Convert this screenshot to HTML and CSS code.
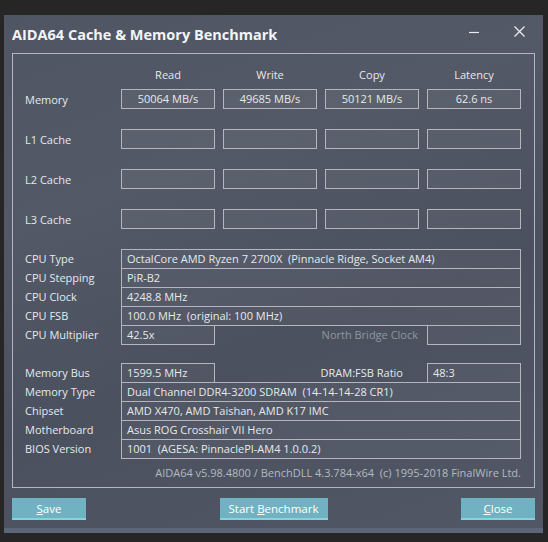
FILE: index.html
```html
<!DOCTYPE html>
<html lang="en">
<head>
    <meta charset="UTF-8">
    <title>AIDA64 Cache &amp; Memory Benchmark</title>
    <link rel="stylesheet" href="styles.css">
</head>
<body>
    <div class="window">
        <!-- Title bar -->
        <header class="titlebar">
            <h1>AIDA64 Cache &amp; Memory Benchmark</h1>
            <div class="controls">
                <svg width="10" height="10" viewBox="0 0 10 10"><path d="M0 6.5h10" stroke="#e8ecef" stroke-width="1.2"/></svg>
                <svg width="11" height="11" viewBox="0 0 11 11"><path d="M0.5 0.5l10 10M10.5 0.5l-10 10" stroke="#e8ecef" stroke-width="1.3"/></svg>
            </div>
        </header>

        <!-- Results panel -->
        <section class="panel">
            <div class="heads">
                <div></div>
                <div class="head">Read</div>
                <div class="head">Write</div>
                <div class="head">Copy</div>
                <div class="head">Latency</div>
            </div>

            <div class="bench">
                <div class="label">Memory</div>
                <div class="box">50064 MB/s</div>
                <div class="box">49685 MB/s</div>
                <div class="box">50121 MB/s</div>
                <div class="box">62.6 ns</div>

                <div class="label">L1 Cache</div>
                <div class="box"></div><div class="box"></div><div class="box"></div><div class="box"></div>

                <div class="label">L2 Cache</div>
                <div class="box"></div><div class="box"></div><div class="box"></div><div class="box"></div>

                <div class="label">L3 Cache</div>
                <div class="box"></div><div class="box"></div><div class="box"></div><div class="box"></div>
            </div>

            <div class="info">
                <div class="label">CPU Type</div>
                <div class="field wide">OctalCore AMD Ryzen 7 2700X&nbsp; (Pinnacle Ridge, Socket AM4)</div>
                <div class="label">CPU Stepping</div>
                <div class="field wide">PiR-B2</div>
                <div class="label">CPU Clock</div>
                <div class="field wide">4248.8 MHz</div>
                <div class="label">CPU FSB</div>
                <div class="field wide">100.0 MHz&nbsp; (original: 100 MHz)</div>
                <div class="label">CPU Multiplier</div>
                <div class="field">42.5x</div>
                <div class="side dim">North Bridge Clock</div>
                <div class="field"></div>
            </div>

            <div class="info">
                <div class="label">Memory Bus</div>
                <div class="field">1599.5 MHz</div>
                <div class="side ratio">DRAM:FSB Ratio</div>
                <div class="field">48:3</div>
                <div class="label">Memory Type</div>
                <div class="field wide">Dual Channel DDR4-3200 SDRAM&nbsp; (14-14-14-28 CR1)</div>
                <div class="label">Chipset</div>
                <div class="field wide">AMD X470, AMD Taishan, AMD K17 IMC</div>
                <div class="label">Motherboard</div>
                <div class="field wide">Asus ROG Crosshair VII Hero</div>
                <div class="label">BIOS Version</div>
                <div class="field wide">1001&nbsp; (AGESA: PinnaclePI-AM4 1.0.0.2)</div>
            </div>

            <p class="version">AIDA64 v5.98.4800 / BenchDLL 4.3.784-x64&nbsp; (c) 1995-2018 FinalWire Ltd.</p>
        </section>

        <!-- Buttons -->
        <div class="buttons">
            <button><u>S</u>ave</button>
            <button>Start <u>B</u>enchmark</button>
            <button><u>C</u>lose</button>
        </div>

        <div class="statusbar"></div>
    </div>
</body>
</html>
```

FILE: styles.css
```css
/* General */
body {
    margin: 0;
    background-color: #262626;
    font-family: "Open Sans", "Noto Sans", sans-serif;
    font-size: 11px;
    color: #e6e9ec;
}

.window {
    margin: 15px 0 0 4px;
    width: 539px;
    height: 518px;
    background-color: #4c5260;
    background-image: linear-gradient(160deg, rgba(255,255,255,0.02) 0%, rgba(255,255,255,0.04) 30%, rgba(0,0,0,0.02) 60%, rgba(255,255,255,0.03) 100%);
    display: flex;
    flex-direction: column;
}

/* Title bar */
.titlebar {
    height: 38px;
    display: flex;
    justify-content: space-between;
    align-items: center;
    padding: 0 18px 0 8px;
}

.titlebar h1 {
    margin: 0;
    font-size: 14.5px;
    font-weight: bold;
    color: #f2f4f6;
    margin-top: 0;
}

.controls {
    display: flex;
    align-items: center;
    gap: 35px;
    margin-top: -6px;
}

/* Panel */
.panel {
    margin: 0 8px;
    height: 423px;
    border: 1px solid #b3b7bd;
    padding: 10px 12px 0 12px;
    display: flex;
    flex-direction: column;
}

.heads,
.bench,
.info {
    display: grid;
    grid-template-columns: 88px repeat(4, 94px);
    column-gap: 8px;
}

.heads {
    height: 20px;
    align-items: center;
    text-align: center;
    margin-bottom: 5px;
}

.bench {
    grid-auto-rows: 20px;
    row-gap: 20px;
}

.label {
    align-self: center;
    white-space: nowrap;
}

.box {
    box-sizing: border-box;
    height: 20px;
    border: 1px solid #b3b7bd;
    background-color: rgba(255, 255, 255, 0.05);
    text-align: center;
    line-height: 18px;
}

.info {
    grid-auto-rows: 19px;
    margin-top: 20px;
}

.info + .info {
    margin-top: 19px;
}

.field {
    box-sizing: border-box;
    height: 20px;
    border: 1px solid #b3b7bd;
    background-color: rgba(255, 255, 255, 0.04);
    padding-left: 5px;
    line-height: 18px;
    white-space: nowrap;
}

.field.wide {
    grid-column: 2 / 6;
}

.side {
    grid-column: 3 / 5;
    text-align: right;
    align-self: center;
    white-space: nowrap;
}

.side.dim {
    color: #8e989c;
    padding-right: 1px;
}

.side.ratio {
    padding-right: 16px;
}

.version {
    margin: 7px 1px 0 0;
    text-align: right;
    color: #b4b9be;
}

/* Buttons */
.buttons {
    display: flex;
    justify-content: space-between;
    padding: 10px 8px 0 8px;
}

.buttons button {
    height: 22px;
    background-color: #71b2c2;
    color: #ffffff;
    border: none;
    border-bottom: 2px solid #86d3da;
    font-family: inherit;
    font-size: 11.5px;
    padding: 0;
    width: 74px;
}

.buttons button:nth-child(2) {
    width: 108px;
}

.statusbar {
    margin-top: auto;
    height: 5px;
    background-color: #5b6679;
}
```
